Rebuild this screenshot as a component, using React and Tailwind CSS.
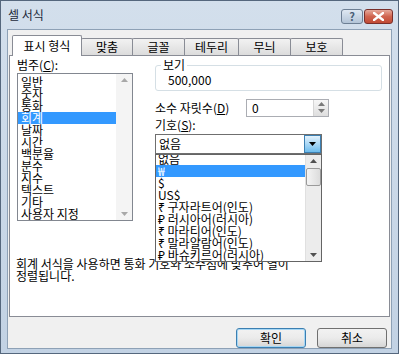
import React from 'react'

const font = { fontFamily: '"Noto Sans CJK KR", "Noto Sans", sans-serif' }

const categories = ['일반', '숫자', '통화', '회계', '날짜', '시간', '백분율', '분수', '지수', '텍스트', '기타', '사용자 지정']
const symbols = ['없음', '₩', '$', 'US$', '₹ 구자라트어(인도)', '₽ 러시아어(러시아)', '₹ 마라티어(인도)', '₹ 말라얄람어(인도)', '₽ 바슈키르어(러시아)']
const tabs = [
  { label: '맞춤', w: 'w-[52px]' },
  { label: '글꼴', w: 'w-[53px]' },
  { label: '테두리', w: 'w-[55px]' },
  { label: '무늬', w: 'w-[53px]' },
  { label: '보호', w: 'w-[53px]' },
]

function Arrow({ dir = 'down', className = '' }) {
  return (
    <svg width="7" height="4" viewBox="0 0 7 4" className={className}>
      {dir === 'down' ? <path d="M0 0h7L3.5 4z" fill="currentColor" /> : <path d="M0 4h7L3.5 0z" fill="currentColor" />}
    </svg>
  )
}

function TitleBar() {
  return (
    <div className="h-[28px] flex items-start justify-between pl-[7px] pr-[5px]">
      <span className="text-[12px] leading-[12px] mt-[8px] text-[#1d2a3a]">셀 서식</span>
      <div className="flex mt-[8px] gap-[1px]">
        <div className="w-[22px] h-[15px] rounded-[3px] border border-[#6d7f94] bg-gradient-to-b from-[#dfe8f2] to-[#b3c4d7] flex items-center justify-center text-[11px] leading-none text-[#4a5e76] font-bold">?</div>
        <div className="w-[29px] h-[15px] rounded-[3px] border border-[#7a2f2a] bg-gradient-to-b from-[#e5a99c] via-[#d0644f] to-[#c04a35] flex items-center justify-center">
          <svg width="11" height="9" viewBox="0 0 11 9">
            <path d="M1 1l9 7M10 1L1 8" stroke="#fff" strokeWidth="2.4" strokeLinecap="square" />
          </svg>
        </div>
      </div>
    </div>
  )
}

function Tabs() {
  return (
    <div className="flex items-end h-[21px] ml-[3px] relative z-10">
      <div className="w-[70px] h-[21px] -mb-px bg-white border border-b-0 border-[#898c95] rounded-t-[2px] flex items-center justify-center text-[12px] leading-[12px] text-black">
        표시 형식
      </div>
      {tabs.map(t => (
        <div
          key={t.label}
          className={`${t.w} h-[17px] -ml-px first:ml-0 bg-gradient-to-b from-[#f2f2f2] to-[#dcdcdc] border border-b-0 border-[#898c95] rounded-t-[2px] flex items-center justify-center text-[12px] leading-[12px] text-black`}
        >
          {t.label}
        </div>
      ))}
    </div>
  )
}

function CategoryList() {
  return (
    <div className="w-[116px] h-[148px] border border-[#828790] bg-white flex mt-[2px]">
      <div className="flex-1 pt-[2px]">
        {categories.map(c => (
          <div
            key={c}
            className={`h-[12px] leading-[12px] text-[12px] pl-[3px] ${c === '회계' ? 'bg-[#3399ff] text-white' : 'text-black'}`}
          >
            {c}
          </div>
        ))}
      </div>
      <div className="w-[16px] bg-[#f4f4f4] flex flex-col justify-between items-center py-[4px] text-[#a8a8a8]">
        <Arrow dir="up" />
        <Arrow dir="down" />
      </div>
    </div>
  )
}

function SymbolDropdown() {
  return (
    <div className="absolute left-0 top-[20px] w-[167px] h-[108px] border border-[#646464] bg-white flex z-20">
      <div className="flex-1 overflow-hidden">
        <div className="-mt-[2px]">
          {symbols.map(s => (
            <div
              key={s}
              className={`h-[12px] leading-[12px] text-[12px] pl-[2px] whitespace-nowrap ${s === '₩' ? 'bg-[#3399ff] text-white' : 'text-black'}`}
            >
              {s}
            </div>
          ))}
        </div>
      </div>
      <div className="w-[16px] bg-[#ececec] border-l border-[#e0e0e0] flex flex-col items-center py-[4px] text-[#505050]">
        <Arrow dir="up" />
        <div className="w-[15px] h-[18px] mt-[5px] rounded-[2px] border border-[#9a9a9a] bg-gradient-to-r from-[#f4f4f4] to-[#dcdcdc]" />
        <div className="flex-1" />
        <Arrow dir="down" />
      </div>
    </div>
  )
}

function RightColumn() {
  return (
    <div className="w-[227px] ml-[22px] flex flex-col">
      <div className="relative mt-[9px] h-[26px] border border-[#d5dfe5] rounded-[3px]">
        <span className="absolute -top-[7px] left-[5px] bg-white px-[2px] text-[12px] leading-[12px] text-black">보기</span>
        <div className="pl-[12px] pt-[8px] text-[12px] leading-[12px] text-black">500,000</div>
      </div>
      <div className="flex items-center mt-[8px] h-[18px]">
        <span className="text-[12px] leading-[12px] text-black w-[91px]">
          소수 자릿수(<span className="underline">D</span>)
        </span>
        <div className="w-[83px] h-[18px] border border-[#abadb3] bg-white flex">
          <span className="flex-1 pl-[5px] pt-[2px] text-[12px] leading-[12px] text-black">0</span>
          <div className="w-[15px] flex flex-col border-l border-[#d5d5d5] bg-gradient-to-b from-[#f6f6f6] to-[#dedede] items-center justify-center gap-[3px] text-[#7a7a7a]">
            <Arrow dir="up" />
            <Arrow dir="down" />
          </div>
        </div>
      </div>
      <div className="mt-[2px] text-[12px] leading-[12px] text-black">
        기호(<span className="underline">S</span>):
      </div>
      <div className="relative mt-[3px] w-[167px]">
        <div className="h-[20px] border border-[#6f6f6f] bg-white flex">
          <span className="flex-1 pl-[3px] pt-[3px] text-[12px] leading-[12px] text-black">없음</span>
          <div className="w-[17px] border border-[#3c7fb1] bg-gradient-to-b from-[#e3f2fc] via-[#a9d7f5] to-[#6bbbec] flex items-center justify-center text-black">
            <Arrow dir="down" />
          </div>
        </div>
        <SymbolDropdown />
      </div>
    </div>
  )
}

function FormatPanel() {
  return (
    <div className="h-[263px] border border-[#898c95] bg-white flex flex-col">
      <div className="flex h-[201px] pl-[7px]">
        <div className="flex flex-col">
          <div className="mt-[3px] text-[12px] leading-[12px] text-black">
            범주(<span className="underline">C</span>):
          </div>
          <CategoryList />
        </div>
        <RightColumn />
      </div>
      <p className="pl-[6px] mt-[1px] text-[12px] leading-[12px] text-black">
        회계 서식을 사용하면 통화 기호와 소수점에 맞추어 열이
        <br />
        정렬됩니다.
      </p>
    </div>
  )
}

function Button({ label, primary }) {
  return (
    <div
      className={`w-[70px] h-[20px] rounded-[3px] border flex items-center justify-center text-[12px] leading-[12px] text-black bg-gradient-to-b from-[#f2f2f2] via-[#ebebeb] to-[#d6d6d6] ${primary ? 'border-[#3c7fb1] shadow-[inset_0_0_0_1px_#a6d7f5]' : 'border-[#707070]'}`}
    >
      {label}
    </div>
  )
}

export default function App() {
  return (
    <div className="w-[399px] h-[354px] bg-gradient-to-b from-[#d3dfec] to-[#c2d2e4] border border-[#55677d] flex flex-col overflow-hidden" style={font}>
      <TitleBar />
      <div className="mx-[6px] h-[320px] bg-[#f0f0f0] border border-[#8ea1b6] pt-[4px] px-[1px] flex flex-col">
        <Tabs />
        <FormatPanel />
        <div className="flex justify-end gap-[11px] mt-[11px] pr-[3px]">
          <Button label="확인" primary />
          <Button label="취소" />
        </div>
      </div>
    </div>
  )
}
